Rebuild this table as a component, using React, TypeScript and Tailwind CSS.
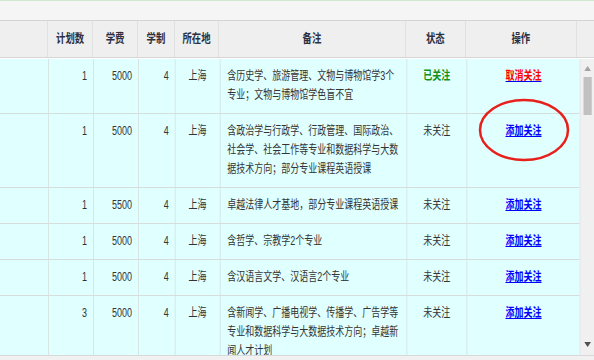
import React from "react";

type Row = {
  plan: string;
  fee: string;
  years: string;
  city: string;
  note: string[];
  followed: boolean;
};

const rows: Row[] = [
  {
    plan: "1",
    fee: "5000",
    years: "4",
    city: "上海",
    note: ["含历史学、旅游管理、文物与博物馆学3个", "专业；文物与博物馆学色盲不宜"],
    followed: true,
  },
  {
    plan: "1",
    fee: "5000",
    years: "4",
    city: "上海",
    note: [
      "含政治学与行政学、行政管理、国际政治、",
      "社会学、社会工作等专业和数据科学与大数",
      "据技术方向；部分专业课程英语授课",
    ],
    followed: false,
  },
  {
    plan: "1",
    fee: "5500",
    years: "4",
    city: "上海",
    note: ["卓越法律人才基地，部分专业课程英语授课"],
    followed: false,
  },
  {
    plan: "1",
    fee: "5000",
    years: "4",
    city: "上海",
    note: ["含哲学、宗教学2个专业"],
    followed: false,
  },
  {
    plan: "1",
    fee: "5000",
    years: "4",
    city: "上海",
    note: ["含汉语言文学、汉语言2个专业"],
    followed: false,
  },
  {
    plan: "3",
    fee: "5000",
    years: "4",
    city: "上海",
    note: [
      "含新闻学、广播电视学、传播学、广告学等",
      "专业和数据科学与大数据技术方向；卓越新",
      "闻人才计划",
    ],
    followed: false,
  },
];

const cell = "border-r border-[#d6dddd] py-2";

const App = () => {
  return (
    <div
      className="relative w-[594px] h-[360px] overflow-hidden bg-[#f3f3f3]"
      style={{ fontFamily: '"Liberation Sans", "Noto Sans CJK SC", sans-serif' }}
    >
      {/* the screenshot is squeezed sideways, so the page is laid out wider and scaled */}
      <div className="w-[792px] h-[360px] origin-top-left scale-x-75 flex flex-col">
        <div className="h-[21px] shrink-0 border-t border-b border-t-[#cfe8cf] border-b-[#d4d4d4] bg-[#f5f5f5]" />

        <div className="h-[37px] shrink-0 flex bg-[#efefef] border-b border-[#d6d6d6] text-[12.5px] font-bold text-[#2a3044]">
          <div className="w-[64px] border-r border-[#dcdcdc]" />
          <div className="w-[60px] border-r border-[#dcdcdc] flex items-center justify-center">计划数</div>
          <div className="w-[60px] border-r border-[#dcdcdc] flex items-center justify-center">学费</div>
          <div className="w-[49px] border-r border-[#dcdcdc] flex items-center justify-center">学制</div>
          <div className="w-[59px] border-r border-[#dcdcdc] flex items-center justify-center">所在地</div>
          <div className="w-[249px] border-r border-[#dcdcdc] flex items-center justify-center">备注</div>
          <div className="w-[80px] border-r border-[#dcdcdc] flex items-center justify-center">状态</div>
          <div className="w-[148px] border-r border-[#dcdcdc] flex items-center justify-center">操作</div>
          <div className="flex-1" />
        </div>

        <div className="h-[1px] shrink-0 bg-white" />

        <div className="h-[296px] shrink-0 flex overflow-hidden">
          <div className="flex-1 bg-[#e0ffff] text-[12px] leading-[19px] text-[#333]">
            {rows.map((r, i) => (
              <div key={i} className="flex border-b border-[#d6dddd]">
                <div className={`w-[65px] ${cell}`} />
                <div className={`w-[60px] ${cell} text-right pr-2`}>{r.plan}</div>
                <div className={`w-[60px] ${cell} text-right pr-2`}>{r.fee}</div>
                <div className={`w-[49px] ${cell} text-right pr-2`}>{r.years}</div>
                <div className={`w-[60px] ${cell} text-center`}>{r.city}</div>
                <div className={`w-[249px] ${cell} pl-[9px]`}>
                  {r.note.map((line, j) => (
                    <div key={j} className="whitespace-nowrap">
                      {line}
                    </div>
                  ))}
                </div>
                <div className={`w-[80px] ${cell} text-center`}>
                  {r.followed ? (
                    <span className="font-bold text-[#159015]">已关注</span>
                  ) : (
                    "未关注"
                  )}
                </div>
                <div className="flex-1 py-2 text-center">
                  {r.followed ? (
                    <a href="#" className="font-bold text-[#ff0000] underline decoration-[#0000ee]">
                      取消关注
                    </a>
                  ) : (
                    <a href="#" className="font-bold text-[#0000ff] underline">
                      添加关注
                    </a>
                  )}
                </div>
              </div>
            ))}
          </div>

          <div className="w-[19px] shrink-0 bg-[#f0f0f0] border-l border-[#e4e4e4] flex flex-col items-center">
            <div className="h-[18px] flex items-center justify-center">
              <svg width="9" height="5" viewBox="0 0 9 5">
                <path d="M4.5 0 L9 5 L0 5 Z" fill="#a3a3a3" />
              </svg>
            </div>
            <div className="w-[11px] h-[38px] bg-[#c1c1c1]" />
            <div className="flex-1" />
            <div className="h-[18px] flex items-center justify-center mb-[2px]">
              <svg width="9" height="5" viewBox="0 0 9 5">
                <path d="M0 0 L9 0 L4.5 5 Z" fill="#505050" />
              </svg>
            </div>
          </div>
        </div>

        <div className="flex-1 border-t border-[#d9d9d9] bg-[#f1f1f1]" />
      </div>

      <svg
        className="absolute left-[478px] top-[98px]"
        width="92"
        height="64"
        viewBox="0 0 92 64"
      >
        <ellipse cx="46" cy="32" rx="44" ry="30" fill="none" stroke="#e8201c" strokeWidth="2.5" />
      </svg>
    </div>
  );
};

export default App;
